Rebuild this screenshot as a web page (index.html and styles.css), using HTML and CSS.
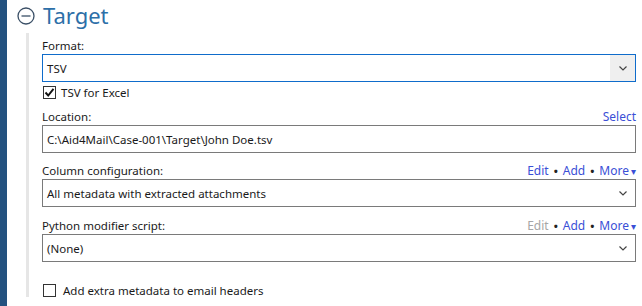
FILE: index.html
```html
<!DOCTYPE html>
<html>
<head>
<meta charset="utf-8">
<link rel="stylesheet" href="styles.css">
</head>
<body>
<div class="app">
  <div class="sidebar"></div>
  <div class="content">
    <div class="header">
      <svg class="collapse" width="18" height="18" viewBox="0 0 18 18">
        <circle cx="9" cy="9" r="8" fill="none" stroke="#3a4f66" stroke-width="1.3"/>
        <line x1="4.5" y1="9" x2="13.5" y2="9" stroke="#3a4f66" stroke-width="1.3"/>
      </svg>
      <span class="title">Target</span>
    </div>
    <div class="section">
      <div class="label-row"><span>Format:</span></div>
      <div class="box focused">
        <span class="value">TSV</span>
        <span class="drop-btn grey"><svg width="8" height="5" viewBox="0 0 8 5"><polyline points="0.5,0.5 4,4 7.5,0.5" fill="none" stroke="#444" stroke-width="1.2"/></svg></span>
      </div>
      <div class="check-row first">
        <span class="checkbox"><svg width="11" height="11" viewBox="0 0 11 11"><polyline points="1.5,5.5 4.2,8.5 9.5,1.8" fill="none" stroke="#111" stroke-width="1.9"/></svg></span>
        <span class="check-text">TSV for Excel</span>
      </div>
      <div class="label-row gap9"><span>Location:</span><span class="links"><a class="link">Select</a></span></div>
      <div class="box">
        <span class="value">C:\Aid4Mail\Case-001\Target\John Doe.tsv</span>
      </div>
      <div class="label-row gap10"><span>Column configuration:</span><span class="links"><a class="link">Edit</a><span class="dot">•</span><a class="link">Add</a><span class="dot">•</span><a class="link">More<span class="tri">▾</span></a></span></div>
      <div class="box">
        <span class="value">All metadata with extracted attachments</span>
        <span class="drop-btn"><svg width="8" height="5" viewBox="0 0 8 5"><polyline points="0.5,0.5 4,4 7.5,0.5" fill="none" stroke="#444" stroke-width="1.2"/></svg></span>
      </div>
      <div class="label-row gap11"><span>Python modifier script:</span><span class="links"><a class="link disabled">Edit</a><span class="dot">•</span><a class="link">Add</a><span class="dot">•</span><a class="link">More<span class="tri">▾</span></a></span></div>
      <div class="box">
        <span class="value">(None)</span>
        <span class="drop-btn"><svg width="8" height="5" viewBox="0 0 8 5"><polyline points="0.5,0.5 4,4 7.5,0.5" fill="none" stroke="#444" stroke-width="1.2"/></svg></span>
      </div>
      <div class="check-row last">
        <span class="checkbox"></span>
        <span class="check-text wide">Add extra metadata to email headers</span>
      </div>
    </div>
  </div>
</div>
</body>
</html>
```
FILE: styles.css
```css
html, body {
  margin: 0;
  padding: 0;
  background: #ffffff;
  width: 642px;
  height: 306px;
  overflow: hidden;
}
.app {
  display: flex;
  height: 306px;
  font-family: "Noto Sans", "Open Sans", sans-serif;
  font-size: 11.5px;
  color: #1a1a1a;
}
.sidebar {
  width: 7px;
  flex: none;
  background: #24527f;
}
.content {
  flex: 1;
  padding-right: 6px;
}
.header {
  height: 33px;
  display: flex;
  align-items: center;
  padding-left: 10px;
}
.collapse {
  flex: none;
  margin-top: -2px;
}
.title {
  margin-left: 8px;
  font-size: 22px;
  font-weight: 400;
  color: #2d6fa8;
  line-height: 30px;
  padding-bottom: 3px;
}
.section {
  margin-left: 19px;
  border-left: 3px solid #e6e6e6;
  padding-left: 13px;
  padding-top: 5px;
  height: 264px;
  box-sizing: border-box;
}
.label-row {
  height: 16px;
  line-height: 16px;
  display: flex;
  justify-content: space-between;
  white-space: nowrap;
}
.gap9 { margin-top: 9px; }
.gap10 { margin-top: 10px; }
.gap11 { margin-top: 11px; }
.links {
  display: flex;
  align-items: center;
  font-size: 12px;
}
.link {
  color: #3a4fd6;
}
.link.disabled {
  color: #a6a6a6;
}
.dot {
  color: #222;
  font-size: 11px;
  font-weight: 700;
  margin: 0 5px;
}
.tri {
  font-size: 10px;
  margin-left: 2px;
}
.box {
  height: 28px;
  box-sizing: border-box;
  border: 1px solid #7a7a7a;
  display: flex;
  align-items: center;
  justify-content: space-between;
  background: #fff;
}
.box.focused {
  border-color: #0f6ccb;
}
.value {
  padding-left: 4px;
  white-space: nowrap;
}
.drop-btn {
  width: 25px;
  height: 100%;
  display: flex;
  align-items: center;
  justify-content: center;
}
.drop-btn.grey {
  background: #efefef;
}
.check-row {
  height: 16px;
  display: flex;
  align-items: center;
}
.check-row.first { margin-top: 2px; }
.check-row.last { margin-top: 20px; }
.checkbox {
  width: 13px;
  height: 13px;
  box-sizing: border-box;
  border: 1px solid #333;
  margin-left: 1px;
  display: flex;
  align-items: center;
  justify-content: center;
  background: #fff;
}
.check-text {
  margin-left: 5px;
}
.check-text.wide {
  margin-left: 7px;
}
```
